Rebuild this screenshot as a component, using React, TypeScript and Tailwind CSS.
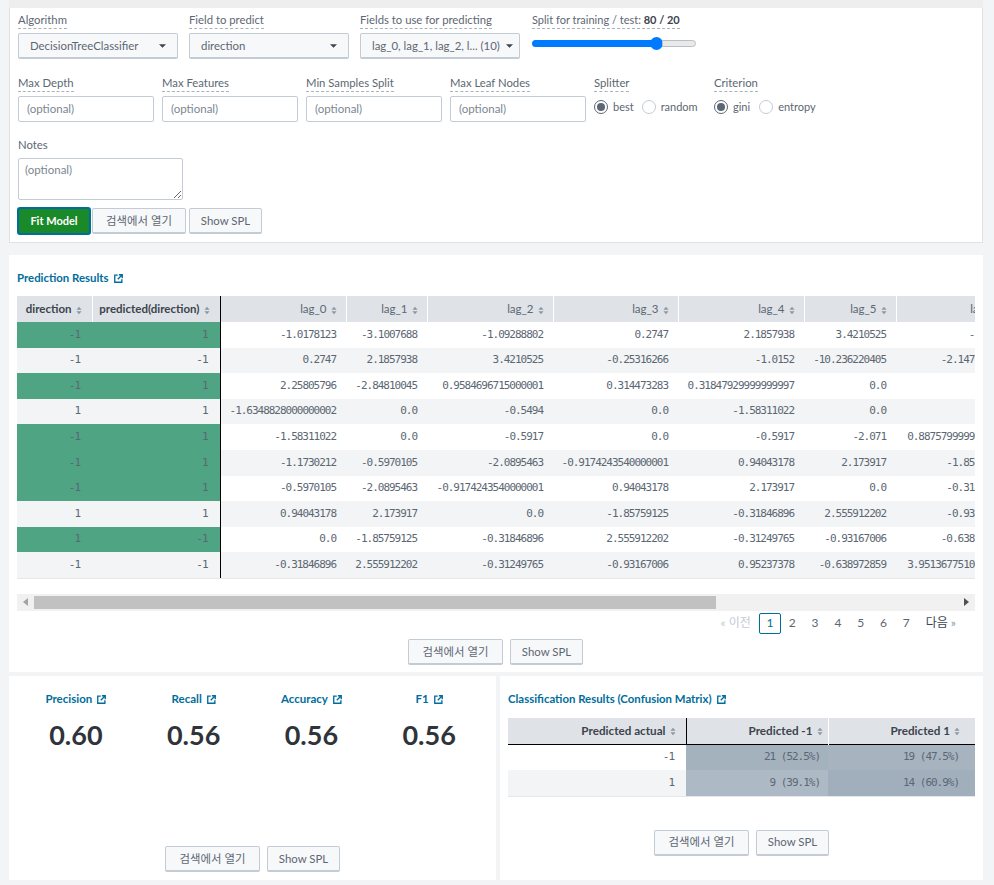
import React from "react";

const SANS = "font-['Lato','Noto_Sans_CJK_KR',sans-serif]";

function Ext({ className = "" }: { className?: string }) {
  return (
    <svg viewBox="0 0 12 12" className={`inline-block w-[9px] h-[9px] ${className}`} fill="none" stroke="currentColor">
      <path d="M5 1.5H1v9.5h9.5V7" strokeWidth="1.8" />
      <path d="M5 7 L10 2 M6.5 1h4.5v4.5" strokeWidth="1.8" />
    </svg>
  );
}

function Sort() {
  return (
    <svg viewBox="0 0 7 10" className="inline-block w-[6px] h-[9px] ml-[4px] text-[#8d98a3]" fill="currentColor">
      <path d="M3.5 0.5 L6.5 4 H0.5Z M3.5 9.5 L6.5 6 H0.5Z" />
    </svg>
  );
}

function Caret({ className = "" }: { className?: string }) {
  return (
    <svg viewBox="0 0 8 4" className={`w-[7px] h-[4px] text-[#3c444d] ${className}`} fill="currentColor">
      <path d="M0 0H8L4 4Z" />
    </svg>
  );
}

function Label({ children }: { children: React.ReactNode }) {
  return (
    <span className="inline-block self-start border-b border-dashed border-[#a9b2bb] pb-[2px] text-[11.3px] leading-[13px] text-[#5c6773]">
      {children}
    </span>
  );
}

function Btn({ children, className = "" }: { children: React.ReactNode; className?: string }) {
  return (
    <button className={`h-[26px] rounded-[2px] border border-[#c3cbd4] border-b-2 bg-[#f7f8fa] text-[11.4px] text-[#5c6773] ${className}`}>
      {children}
    </button>
  );
}

function BtnPair({ className = "" }: { className?: string }) {
  return (
    <div className={`flex gap-[7px] justify-center ${className}`}>
      <Btn className="w-[95px]">검색에서 열기</Btn>
      <Btn className="w-[73px]">Show SPL</Btn>
    </div>
  );
}

function Select({ text, w, short }: { text: string; w: string; short?: boolean }) {
  return (
    <div className={`${w} h-[26px] flex items-center justify-between rounded-[2px] border border-[#c3cbd4] border-b-2 bg-[#f7f8fa] ${short ? "pl-[11px] pr-[6px]" : "pl-[11px] pr-[11px]"} text-[11.4px] text-[#5c6773]`}>
      <span className="whitespace-nowrap">{text}</span>
      <Caret />
    </div>
  );
}

function Field({ label }: { label: string }) {
  return (
    <div className="w-[136px] flex flex-col gap-[4px]">
      <Label>{label}</Label>
      <input
        placeholder="(optional)"
        className="w-full h-[26px] rounded-[2px] border border-[#c3cbd4] bg-white pl-[8px] pr-[7px] pb-[2px] text-[11.5px] outline-none placeholder:text-[#7b8792]"
      />
    </div>
  );
}

function Radio({ on, label, className = "" }: { on?: boolean; label: string; className?: string }) {
  return (
    <div className={`flex items-center gap-[5px] text-[11px] text-[#5c6773] ${className}`}>
      <span className={`w-[14px] h-[14px] rounded-full border flex items-center justify-center bg-white ${on ? "border-[#5c6773]" : "border-[#c3cbd4]"}`}>
        {on && <span className="w-[8px] h-[8px] rounded-full bg-[#5c6773]" />}
      </span>
      {label}
    </div>
  );
}

const cols = [126, 81, 126, 125, 126, 92, 122];
const headers = ["lag_0", "lag_1", "lag_2", "lag_3", "lag_4", "lag_5", "lag_6"];
const rows: [string, string, boolean, string[]][] = [
  ["-1", "1", true, ["-1.0178123", "-3.1007688", "-1.09288802", "0.2747", "2.1857938", "3.4210525", "-1.0152"]],
  ["-1", "-1", false, ["0.2747", "2.1857938", "3.4210525", "-0.25316266", "-1.0152", "-10.236220405", "-2.147220405"]],
  ["-1", "1", true, ["2.25805796", "-2.84810045", "0.9584696715000001", "0.314473283", "0.31847929999999997", "0.0", "0.0"]],
  ["1", "1", false, ["-1.6348828000000002", "0.0", "-0.5494", "0.0", "-1.58311022", "0.0", "0.0"]],
  ["-1", "1", true, ["-1.58311022", "0.0", "-0.5917", "0.0", "-0.5917", "-2.071", "0.8875799999999999"]],
  ["-1", "1", true, ["-1.1730212", "-0.5970105", "-2.0895463", "-0.9174243540000001", "0.94043178", "2.173917", "-1.85759125"]],
  ["-1", "1", true, ["-0.5970105", "-2.0895463", "-0.9174243540000001", "0.94043178", "2.173917", "0.0", "-0.31846896"]],
  ["1", "1", false, ["0.94043178", "2.173917", "0.0", "-1.85759125", "-0.31846896", "2.555912202", "-0.93167006"]],
  ["1", "-1", true, ["0.0", "-1.85759125", "-0.31846896", "2.555912202", "-0.31249765", "-0.93167006", "-0.638972859"]],
  ["-1", "-1", false, ["-0.31846896", "2.555912202", "-0.31249765", "-0.93167006", "0.95237378", "-0.638972859", "3.9513677510000003"]],
];

const MONO = "font-['DejaVu_Sans_Mono',monospace] text-[11px] tracking-[-1.02px] text-[#5c6773]";

function Metric({ title, value }: { title: string; value: string }) {
  return (
    <div className="flex flex-col items-center">
      <div className="flex items-center gap-[5px] text-[11.5px] font-bold text-[#006d9c] leading-[14px]">
        {title}
        <Ext />
      </div>
      <div className="mt-[13px] text-[27px] font-bold leading-[32px] text-[#2f343a]">{value}</div>
    </div>
  );
}

export default function App() {
  return (
    <div className={`${SANS} w-[994px] h-[885px] overflow-hidden bg-[#f2f4f5] pl-[9px] pr-[11px]`}>
      {/* form panel */}
      <div className="h-[8px] bg-[#eeeeee]" />
      <section className="h-[235px] bg-white border-x border-b border-[#dfe1e3] pl-[8px] pt-[5px]">
        <div className="flex">
          <div className="flex flex-col gap-[4px] w-[171px]">
            <Label>Algorithm</Label>
            <Select text="DecisionTreeClassifier" w="w-[160px]" />
          </div>
          <div className="flex flex-col gap-[4px] w-[171px]">
            <Label>Field to predict</Label>
            <Select text="direction" w="w-[160px]" />
          </div>
          <div className="flex flex-col gap-[4px] w-[172px]">
            <Label>Fields to use for predicting</Label>
            <Select text="lag_0, lag_1, lag_2, l... (10)" w="w-[160px]" short />
          </div>
          <div className="flex flex-col w-[164px]">
            <Label>
              <span className="text-[11px]">
                Split for training / test: <b className="text-[#3c444d]">80 / 20</b>
              </span>
            </Label>
            <div className="mt-[8px] flex items-center h-[13px] w-[164px]">
              <div className="w-[124px] h-[7px] rounded-l-full bg-[#007bff]" />
              <div className="w-[13px] h-[13px] -ml-[6px] rounded-full bg-[#007bff]" />
              <div className="flex-1 h-[7px] -ml-[1px] rounded-r-full border border-[#b9bfc5] bg-[#e9e9e9]" />
            </div>
          </div>
        </div>

        <div className="flex mt-[17px] gap-[8px]">
          <Field label="Max Depth" />
          <Field label="Max Features" />
          <Field label="Min Samples Split" />
          <Field label="Max Leaf Nodes" />
          <div className="flex flex-col w-[112px]">
            <Label>Splitter</Label>
            <div className="flex mt-[7px] gap-[8px]">
              <Radio on label="best" />
              <Radio label="random" />
            </div>
          </div>
          <div className="flex flex-col">
            <Label>Criterion</Label>
            <div className="flex mt-[7px] gap-[9px]">
              <Radio on label="gini" />
              <Radio label="entropy" />
            </div>
          </div>
        </div>

        <div className="flex flex-col mt-[15px]">
          <span className="text-[11.3px] leading-[15px] text-[#5c6773]">Notes</span>
          <textarea
            placeholder="(optional)"
            className="mt-[6px] block w-[165px] h-[42px] rounded-[2px] border border-[#c3cbd4] bg-white px-[6px] py-[3px] text-[11.5px] leading-[16px] outline-none placeholder:text-[#7b8792]"
          />
        </div>

        <div className="flex items-center mt-[7px] -ml-[1px]">
          <button className="w-[74px] h-[28px] rounded-[3px] border-2 border-[#006d9c] bg-[#1a8929] text-[11px] font-bold text-white">
            Fit Model
          </button>
          <Btn className="w-[94px] ml-[1px]">검색에서 열기</Btn>
          <Btn className="w-[73px] ml-[3px]">Show SPL</Btn>
        </div>
      </section>

      {/* prediction panel */}
      <section className="mt-[12px] h-[417px] bg-white pl-[8px] pr-[8px] pt-[16px]">
        <div className="flex items-center gap-[5px] text-[11.4px] font-bold leading-[14px] text-[#006d9c]">
          Prediction Results
          <Ext />
        </div>
        <div className="mt-[11px] overflow-hidden border-b border-[#e4e8eb]">
          <table className="table-fixed border-collapse w-[1001px]">
            <colgroup>
              <col className="w-[75px]" />
              <col className="w-[128px]" />
              {cols.map((w, i) => (
                <col key={i} style={{ width: w }} />
              ))}
            </colgroup>
            <thead>
              <tr className="h-[26px] bg-[#dfe3e7] text-[11.5px]">
                <th className="pr-[10px] text-right font-bold text-[#3c444d] border-r border-white whitespace-nowrap">
                  direction<Sort />
                </th>
                <th className="pr-[10px] text-right font-bold text-[#3c444d] border-r border-black whitespace-nowrap">
                  predicted(direction)<Sort />
                </th>
                {headers.map((h) => (
                  <th key={h} className={`${h === "lag_6" ? "pr-[11px]" : "pr-[9px]"} text-right font-normal text-[#5c6773] border-r border-white whitespace-nowrap`}>
                    {h}<Sort />
                  </th>
                ))}
              </tr>
            </thead>
            <tbody>
              {rows.map(([a, b, green, vals], i) => {
                const bg = i % 2 === 0 ? "bg-white" : "bg-[#f2f4f5]";
                const fro = green ? "bg-[#4fa484]" : bg;
                return (
                  <tr key={i} className="h-[25.6px]">
                    <td className={`${fro} ${MONO} pr-[12px] text-right`}>{a}</td>
                    <td className={`${fro} ${MONO} pr-[12px] text-right border-r border-black`}>{b}</td>
                    {vals.map((v, j) => (
                      <td key={j} className={`${bg} ${MONO} pr-[10px] text-right whitespace-nowrap overflow-hidden`}>
                        {v}
                      </td>
                    ))}
                  </tr>
                );
              })}
            </tbody>
          </table>
        </div>

        {/* scrollbar */}
        <div className="mt-[15px] h-[17px] bg-[#f1f1f1] flex items-center">
          <div className="w-[17px] flex justify-center">
            <svg viewBox="0 0 5 8" className="w-[5px] h-[8px] text-[#a3a3a3]" fill="currentColor"><path d="M5 0V8L0 4Z" /></svg>
          </div>
          <div className="w-[682px] h-[13px] bg-[#c1c1c1]" />
          <div className="flex-1" />
          <div className="w-[17px] flex justify-center">
            <svg viewBox="0 0 5 8" className="w-[5px] h-[8px] text-[#505050]" fill="currentColor"><path d="M0 0V8L5 4Z" /></svg>
          </div>
        </div>

        {/* pagination */}
        <div className="mt-[2px] flex items-center justify-end h-[21px] pr-[19px] text-[12px] text-[#5c6773]">
          <span className="text-[#c3cbd4] mr-[8px]">« 이전</span>
          <span className="w-[22px] h-[21px] rounded-[2px] border border-[#006d9c] flex items-center justify-center text-[#006d9c]">1</span>
          {["2", "3", "4", "5", "6", "7"].map((n) => (
            <span key={n} className="w-[22.8px] text-center">{n}</span>
          ))}
          <span className="ml-[8px] text-[#3c444d]">다음 <span className="text-[#8d98a3]">»</span></span>
        </div>

        <BtnPair className="mt-[5px] pr-[1px]" />
      </section>

      {/* bottom panels */}
      <div className="mt-[4px] flex gap-[4px]">
        <section className="w-[487px] h-[204px] bg-white px-[8px] pt-[16px] flex flex-col">
          <div className="grid grid-cols-4">
            <Metric title="Precision" value="0.60" />
            <Metric title="Recall" value="0.56" />
            <Metric title="Accuracy" value="0.56" />
            <Metric title="F1" value="0.56" />
          </div>
          <BtnPair className="mt-auto mb-[8px]" />
        </section>

        <section className="w-[483px] h-[204px] bg-white px-[8px] pt-[16px] flex flex-col">
          <div className="flex items-center gap-[5px] text-[11.4px] font-bold leading-[14px] text-[#006d9c]">
            Classification Results (Confusion Matrix)
            <Ext />
          </div>
          <table className="mt-[12px] table-fixed border-collapse w-[467px] text-right border-b border-[#e4e8eb]">
            <colgroup>
              <col className="w-[178px]" />
              <col className="w-[142px]" />
              <col className="w-[147px]" />
            </colgroup>
            <thead>
              <tr className="h-[26px] bg-[#dfe3e7] text-[11.7px] font-bold text-[#3c444d] border-b border-black">
                <th className="pr-[10px] font-bold border-r border-black">Predicted actual<Sort /></th>
                <th className="pr-[5px] font-bold border-r border-white">Predicted -1<Sort /></th>
                <th className="pr-[15px] font-bold">Predicted 1<Sort /></th>
              </tr>
            </thead>
            <tbody>
              <tr className="h-[26px]">
                <td className={`${MONO} pr-[12px] bg-white`}>-1</td>
                <td className={`${MONO} pr-[8px] bg-[#a4b2be]`}>21 (52.5%)</td>
                <td className={`${MONO} pr-[16px] bg-[#a7b4c0]`}>19 (47.5%)</td>
              </tr>
              <tr className="h-[26px]">
                <td className={`${MONO} pr-[12px] bg-[#f2f4f5]`}>1</td>
                <td className={`${MONO} pr-[8px] bg-[#adb9c4]`}>9 (39.1%)</td>
                <td className={`${MONO} pr-[16px] bg-[#a1afbc]`}>14 (60.9%)</td>
              </tr>
            </tbody>
          </table>
          <BtnPair className="mt-[33px]" />
        </section>
      </div>
    </div>
  );
}
